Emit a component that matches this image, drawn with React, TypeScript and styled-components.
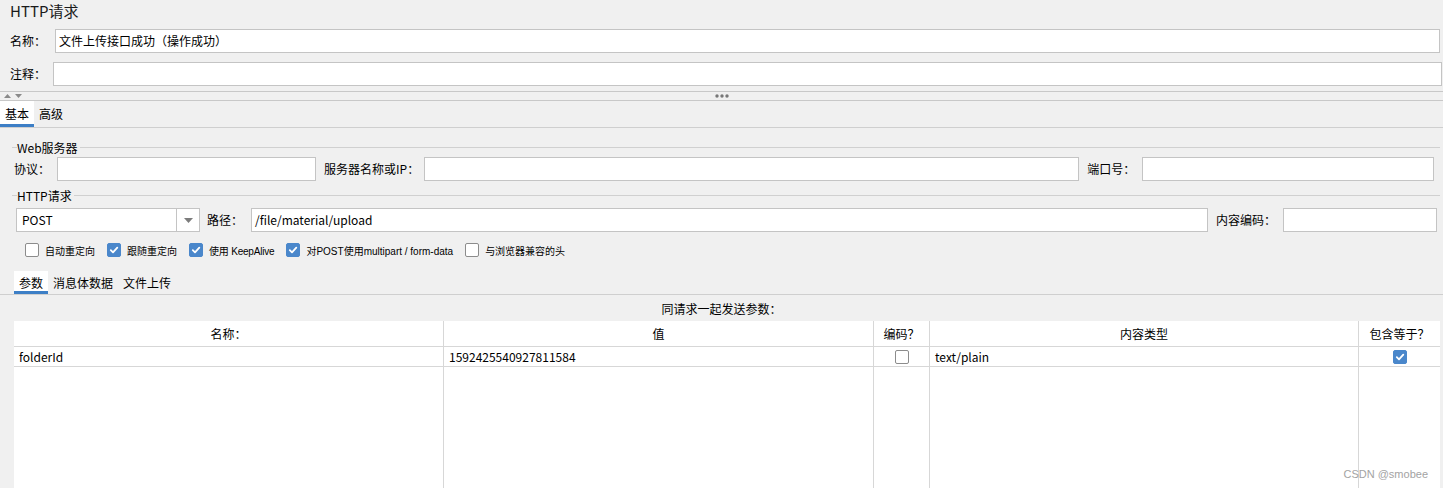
import React from 'react'
import styled, { createGlobalStyle } from 'styled-components'

const GlobalStyle = createGlobalStyle`
    html, body {
        margin: 0;
        padding: 0;
        background: #f0f0f0;
    }
    * {
        box-sizing: border-box;
    }
`

const CheckMark = () => (
    <svg width="10" height="10" viewBox="0 0 10 10">
        <path d="M1.8 5.2 L4 7.4 L8.3 2.6" fill="none" stroke="#fff" strokeWidth="1.8" strokeLinecap="round" strokeLinejoin="round" />
    </svg>
)

const Check = ({ checked }: { checked?: boolean }) => (
    <Box checked={!!checked}>{checked && <CheckMark />}</Box>
)

const App = () => {
    return (
        <>
            <GlobalStyle />
            <Page>
                <Title>HTTP请求</Title>
                <FieldRow>
                    <Label>名称：</Label>
                    <TextInput grow gap={9}>文件上传接口成功（操作成功）</TextInput>
                </FieldRow>
                <FieldRow marginTop={9} rightPad={1}>
                    <Label>注释：</Label>
                    <TextInput grow gap={7} />
                </FieldRow>

                <SplitBar>
                    <svg width="22" height="6" viewBox="0 0 22 6">
                        <path d="M2 5 L5.5 1 L9 5 Z" fill="#8a8a8a" />
                        <path d="M13 1 L16.5 5 L20 1 Z" fill="#8a8a8a" />
                    </svg>
                    <Dots>
                        <svg width="14" height="4" viewBox="0 0 14 4">
                            <circle cx="2" cy="2" r="1.7" fill="#777" />
                            <circle cx="7" cy="2" r="1.7" fill="#777" />
                            <circle cx="12" cy="2" r="1.7" fill="#777" />
                        </svg>
                    </Dots>
                </SplitBar>

                <TabBar height={27} padLeft={0}>
                    <Tab active filled>基本</Tab>
                    <Tab>高级</Tab>
                </TabBar>

                <GroupHeader marginTop={11}>Web服务器</GroupHeader>
                <InputRow marginTop={2}>
                    <Label>协议：</Label>
                    <TextInput width={259} gap={7} />
                    <Label gap={8}>服务器名称或IP：</Label>
                    <TextInput width={655} gap={5} />
                    <Label gap={8}>端口号：</Label>
                    <TextInput width={292} gap={7} />
                </InputRow>

                <GroupHeader marginTop={6}>HTTP请求</GroupHeader>
                <InputRow marginTop={5} padLeft={16}>
                    <Combo>
                        <ComboText>POST</ComboText>
                        <ComboArrow>
                            <svg width="9" height="5" viewBox="0 0 9 5">
                                <path d="M0 0 L9 0 L4.5 5 Z" fill="#7c7c7c" />
                            </svg>
                        </ComboArrow>
                    </Combo>
                    <Label gap={7}>路径：</Label>
                    <TextInput width={957} gap={8}>/file/material/upload</TextInput>
                    <Label gap={8}>内容编码：</Label>
                    <TextInput width={154} gap={7} />
                </InputRow>

                <CheckRow>
                    <CheckItem><Check /><SmallLabel>自动重定向</SmallLabel></CheckItem>
                    <CheckItem><Check checked /><SmallLabel>跟随重定向</SmallLabel></CheckItem>
                    <CheckItem><Check checked /><SmallLabel tight>使用 KeepAlive</SmallLabel></CheckItem>
                    <CheckItem><Check checked /><SmallLabel>对POST使用multipart / form-data</SmallLabel></CheckItem>
                    <CheckItem><Check /><SmallLabel>与浏览器兼容的头</SmallLabel></CheckItem>
                </CheckRow>

                <TabBar height={24} padLeft={14} marginTop={14}>
                    <Tab active filled>参数</Tab>
                    <Tab>消息体数据</Tab>
                    <Tab>文件上传</Tab>
                </TabBar>

                <Caption>同请求一起发送参数：</Caption>

                <Table>
                    <HeadCell>名称：</HeadCell>
                    <HeadCell>值</HeadCell>
                    <HeadCell>编码？</HeadCell>
                    <HeadCell>内容类型</HeadCell>
                    <HeadCell last>包含等于？</HeadCell>

                    <Cell>folderId</Cell>
                    <Cell>1592425540927811584</Cell>
                    <Cell center><Check /></Cell>
                    <Cell>text/plain</Cell>
                    <Cell center last><Check checked /></Cell>

                    <FillCell />
                    <FillCell />
                    <FillCell />
                    <FillCell />
                    <FillCell last />
                </Table>

                <Watermark>CSDN @smobee</Watermark>
            </Page>
        </>
    )
}

const Page = styled.div`
    position: relative;
    width: 1443px;
    height: 488px;
    overflow: hidden;
    background: #f0f0f0;
    color: #000;
    font-family: "Noto Sans CJK SC", "Noto Sans", sans-serif;
    font-size: 12px;
    display: flex;
    flex-direction: column;
`

const Title = styled.div`
    height: 29px;
    padding-left: 10px;
    font-size: 15px;
    line-height: 22px;
    color: #1a1a1a;
`

const FieldRow = styled.div<{ marginTop?: number; rightPad?: number }>`
    display: flex;
    align-items: center;
    height: 24px;
    margin-top: ${p => p.marginTop ?? 0}px;
    padding-left: 10px;
    padding-right: ${p => p.rightPad ?? 3}px;
`

const Label = styled.span<{ gap?: number }>`
    margin-left: ${p => p.gap ?? 0}px;
    white-space: nowrap;
    line-height: 24px;
`

const TextInput = styled.div<{ width?: number; grow?: boolean; gap?: number }>`
    height: 24px;
    ${p => (p.grow ? 'flex: 1;' : `width: ${p.width}px;`)}
    margin-left: ${p => p.gap ?? 0}px;
    background: #fff;
    border: 1px solid #c4c4c4;
    padding: 0 3px;
    line-height: 22px;
    white-space: nowrap;
    overflow: hidden;
`

const SplitBar = styled.div`
    display: flex;
    align-items: center;
    height: 10px;
    margin-top: 5px;
    border-top: 1px solid #c8c8c8;
    border-bottom: 1px solid #c8c8c8;
    padding-left: 2px;
`

const Dots = styled.div`
    flex: 1;
    display: flex;
    justify-content: center;
    padding-right: 24px;
    line-height: 0;
`

const TabBar = styled.div<{ height: number; padLeft: number; marginTop?: number }>`
    display: flex;
    align-items: stretch;
    height: ${p => p.height}px;
    margin-top: ${p => p.marginTop ?? 0}px;
    padding-left: ${p => p.padLeft}px;
    border-bottom: 1px solid #cfcfcf;
`

const Tab = styled.div<{ active?: boolean; filled?: boolean }>`
    display: flex;
    align-items: center;
    padding: 2px 5px 0;
    font-size: 12px;
    background: ${p => (p.filled ? '#fff' : 'transparent')};
    border-bottom: 3px solid ${p => (p.active ? '#3d7fc6' : 'transparent')};
`

const GroupHeader = styled.div<{ marginTop: number }>`
    display: flex;
    align-items: center;
    height: 16px;
    margin-top: ${p => p.marginTop}px;
    padding: 0 3px 0 12px;
    font-size: 12px;
    white-space: nowrap;

    &::before {
        content: '';
        width: 5px;
        border-top: 1px solid #d0d0d0;
    }
    &::after {
        content: '';
        flex: 1;
        border-top: 1px solid #d0d0d0;
        margin-left: 2px;
    }
`

const InputRow = styled.div<{ marginTop: number; padLeft?: number }>`
    display: flex;
    align-items: center;
    height: 24px;
    margin-top: ${p => p.marginTop}px;
    padding-left: ${p => p.padLeft ?? 14}px;
`

const Combo = styled.div`
    display: flex;
    width: 184px;
    height: 24px;
    background: #fff;
    border: 1px solid #c4c4c4;
`

const ComboText = styled.div`
    flex: 1;
    padding-left: 5px;
    line-height: 22px;
`

const ComboArrow = styled.div`
    width: 23px;
    border-left: 1px solid #c4c4c4;
    display: flex;
    align-items: center;
    justify-content: center;
`

const CheckRow = styled.div`
    display: flex;
    align-items: center;
    gap: 12px;
    height: 14px;
    margin-top: 11px;
    padding-left: 25px;
`

const CheckItem = styled.div`
    display: flex;
    align-items: center;
    gap: 6px;
`

const Box = styled.div<{ checked: boolean }>`
    width: 14px;
    height: 14px;
    border-radius: 2px;
    display: flex;
    align-items: center;
    justify-content: center;
    background: ${p => (p.checked ? '#4a87cb' : '#fff')};
    border: 1px solid ${p => (p.checked ? '#4a87cb' : '#8c8c8c')};
`

const SmallLabel = styled.span<{ tight?: boolean }>`
    font-family: "Liberation Sans", "Noto Sans CJK SC", sans-serif;
    font-size: 10px;
    letter-spacing: ${p => (p.tight ? '-0.2px' : '0')};
    white-space: nowrap;
`

const Caption = styled.div`
    height: 26px;
    line-height: 27px;
    text-align: center;
    font-size: 12px;
`

const Table = styled.div`
    flex: 1;
    margin-left: 14px;
    width: 1426px;
    background: #fff;
    display: grid;
    grid-template-columns: 430px 430px 56px 429px 81px;
    grid-template-rows: 26px 20px 1fr;
`

const HeadCell = styled.div<{ last?: boolean }>`
    display: flex;
    align-items: center;
    justify-content: center;
    border-bottom: 1px solid #d7d7d7;
    border-right: ${p => (p.last ? 'none' : '1px solid #d7d7d7')};
    white-space: nowrap;
`

const Cell = styled.div<{ center?: boolean; last?: boolean }>`
    display: flex;
    align-items: center;
    justify-content: ${p => (p.center ? 'center' : 'flex-start')};
    padding-left: ${p => (p.center ? 0 : 5)}px;
    border-bottom: 1px solid #d7d7d7;
    border-right: ${p => (p.last ? 'none' : '1px solid #d7d7d7')};
    white-space: nowrap;
`

const FillCell = styled.div<{ last?: boolean }>`
    border-right: ${p => (p.last ? 'none' : '1px solid #d7d7d7')};
`

const Watermark = styled.div`
    position: absolute;
    right: 15px;
    bottom: 8px;
    font-family: "Liberation Sans", Arial, sans-serif;
    font-size: 11px;
    color: #a3a3a3;
`

export default App
